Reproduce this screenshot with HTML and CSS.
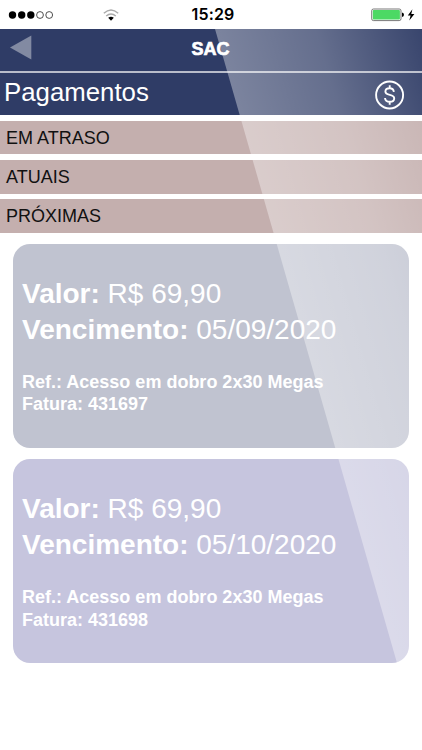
FILE: index.html
```html
<!DOCTYPE html>
<html lang="pt-BR">
<head>
<meta charset="utf-8">
<title>SAC - Pagamentos</title>
<link rel="stylesheet" href="styles.css">
</head>
<body>
<div class="screen">
  <div class="status">
    <svg class="signal" width="46" height="10" viewBox="0 0 46 10"><circle cx="4.5" cy="5" r="3.7"/><circle cx="13.7" cy="5" r="3.7"/><circle cx="22.8" cy="5" r="3.7"/><g class="empty"><circle cx="32" cy="5" r="3.4"/><circle cx="41.2" cy="5" r="3.4"/></g></svg>
    <svg class="wifi" width="16" height="12" viewBox="0 0 16 12"><path class="wave" d="M.8 4.2Q8-2.4 15.2 4.2M3.2 7Q8 2.8 12.8 7"/><path d="M5.2 8.8Q8 6.5 10.8 8.8L8 11.7Z"/></svg>
    <span class="time">15:29</span>
    <svg class="battery" width="45" height="14" viewBox="0 0 45 14"><rect x=".7" y="1" width="29.3" height="11.6" rx="1.8" fill="#fff" stroke="#555" stroke-width=".8"/><rect x="1.8" y="2.1" width="27.1" height="9.4" rx=".8" fill="#4cd964"/><path d="M31 4.6Q33 5 33 6.8T31 9Z"/><path d="M41.4 1.2L36.8 7.5H39.6L38.3 12.4L43.4 5.9H40.3Z"/></svg>
  </div>
  <header class="navbar">
    <svg class="back" width="22" height="25" viewBox="0 0 22 25"><path d="M0 12.5L21.3.4V24.4Z" fill="#828aa2"/></svg>
    <h1>SAC</h1>
  </header>
  <div class="heading">
    <h2>Pagamentos</h2>
    <svg class="coin" width="30" height="30" viewBox="0 0 30 30"><circle cx="14.6" cy="15" r="13.5"/><path d="M18.9 11.8C18.5 9.3 16.8 8.2 14.7 8.2C12.2 8.2 10.4 9.5 10.4 11.5C10.4 16.3 19.2 13.4 19.2 18.2C19.2 20.4 17.3 21.8 14.8 21.8C12 21.8 10.2 20.5 10 18M14.7 5.2V8.2M14.7 21.8V24.8"/></svg>
  </div>
  <nav class="filters">
    <div class="filter">EM ATRASO</div>
    <div class="filter">ATUAIS</div>
    <div class="filter">PRÓXIMAS</div>
  </nav>
  <main class="cards">
    <section class="card">
      <p class="amount"><b>Valor:</b> R$ 69,90</p>
      <p class="amount"><b>Vencimento:</b> 05/09/2020</p>
      <div class="details"><p>Ref.: Acesso em dobro 2x30 Megas</p><p>Fatura: 431697</p></div>
    </section>
    <section class="card lilac">
      <p class="amount"><b>Valor:</b> R$ 69,90</p>
      <p class="amount"><b>Vencimento:</b> 05/10/2020</p>
      <div class="details"><p>Ref.: Acesso em dobro 2x30 Megas</p><p>Fatura: 431698</p></div>
    </section>
  </main>
  <div class="glare"></div>
</div>
</body>
</html>
```
FILE: styles.css
```css
* { box-sizing: border-box; margin: 0; padding: 0; }
body { background: #fff; font-family: "Liberation Sans", Arial, sans-serif; overflow: hidden; }
svg { display: block; flex: none; }
.screen { position: relative; width: 422px; height: 750px; overflow: hidden; }
.status { display: flex; height: 29px; align-items: center; padding: 0 6px 0 8px; }
.signal .empty { fill: none; stroke: #222; stroke-width: .8; }
.wifi { margin-left: 49px; }
.wifi .wave { fill: none; stroke: #aaa; stroke-width: 1.4; }
.time { width: 48px; margin-left: 70px; text-align: center; font: 600 16px/29px Inter, sans-serif; letter-spacing: .2px; white-space: nowrap; }
.battery { margin-left: auto; }
.navbar { display: grid; grid-template-columns: 22px 1fr 22px; height: 42px; background: #2f3c66; padding: 6px 11px 0 10px; }
.navbar h1 { padding-top: 1px; font-size: 18px; line-height: 26px; text-align: center; color: #fff; -webkit-text-stroke: .7px #fff; }
.heading { display: flex; justify-content: space-between; height: 44px; border-top: 2px solid #b9bdcb; background: #2f3c66; padding: 3px 17px 0 4px; color: #fff; }
.heading h2 { padding-top: 1px; font-size: 25.8px; font-weight: 400; line-height: 30px; }
.coin { margin-top: 4px; fill: none; stroke: #fff; stroke-width: 1.9; }
.filters { display: grid; gap: 5.5px; padding-top: 5.5px; }
.filter { height: 33.8px; padding-left: 6px; background: #c4afae; color: #111; font-size: 18px; line-height: 35px; }
.cards { display: grid; gap: 11.5px; padding: 11px 13px 0; }
.card { height: 203.7px; padding: 32px 9px 0; border-radius: 17px; background: #c0c3d0; color: #fff; }
.card.lilac { background: #c6c5de; }
.amount { font-size: 28px; line-height: 36px; white-space: nowrap; }
.details { padding-top: 23px; font-size: 18px; font-weight: 700; line-height: 22.5px; white-space: nowrap; }
.glare { position: absolute; inset: 0; pointer-events: none; clip-path: polygon(215px 29px, 422px 29px, 422px 750px); background: linear-gradient(74deg, rgba(255,255,255,.37) 66.2%, rgba(255,255,255,.26) 82%, rgba(255,255,255,.03) 100%); }
```
